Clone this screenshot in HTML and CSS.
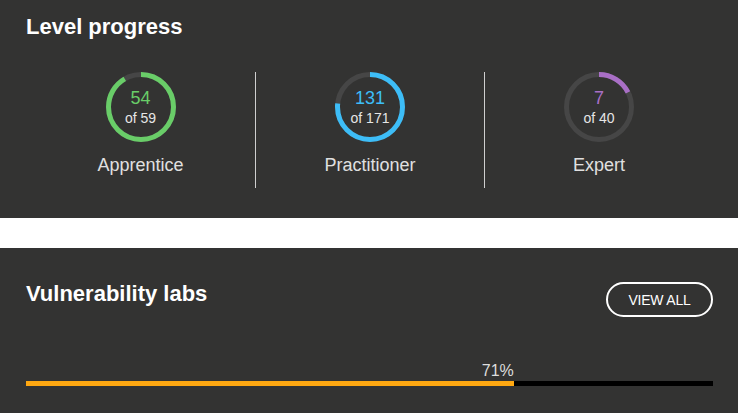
FILE: index.html
```html
<!DOCTYPE html>
<html lang="en">
<head>
<meta charset="utf-8">
<title>Progress</title>
<link rel="stylesheet" href="styles.css">
</head>
<body>
<section class="card card-levels">
  <h2 class="card-title">Level progress</h2>
  <div class="levels">
    <div class="level">
      <div class="ring">
        <svg class="ring-svg" width="70" height="70" viewBox="0 0 70 70">
          <circle class="ring-track" cx="35" cy="35" r="32.5"/>
          <circle class="ring-bar green" cx="35" cy="35" r="32.5" stroke-dasharray="186.9 204.2"/>
        </svg>
        <div class="ring-text">
          <span class="ring-num green-text">54</span>
          <span class="ring-of">of 59</span>
        </div>
      </div>
      <div class="level-name">Apprentice</div>
    </div>
    <div class="level">
      <div class="ring">
        <svg class="ring-svg" width="70" height="70" viewBox="0 0 70 70">
          <circle class="ring-track" cx="35" cy="35" r="32.5"/>
          <circle class="ring-bar blue" cx="35" cy="35" r="32.5" stroke-dasharray="156.4 204.2"/>
        </svg>
        <div class="ring-text">
          <span class="ring-num blue-text">131</span>
          <span class="ring-of">of 171</span>
        </div>
      </div>
      <div class="level-name">Practitioner</div>
    </div>
    <div class="level">
      <div class="ring">
        <svg class="ring-svg" width="70" height="70" viewBox="0 0 70 70">
          <circle class="ring-track" cx="35" cy="35" r="32.5"/>
          <circle class="ring-bar purple" cx="35" cy="35" r="32.5" stroke-dasharray="35.7 204.2"/>
        </svg>
        <div class="ring-text">
          <span class="ring-num purple-text">7</span>
          <span class="ring-of">of 40</span>
        </div>
      </div>
      <div class="level-name">Expert</div>
    </div>
  </div>
</section>
<section class="card card-labs">
  <div class="labs-head">
    <h2 class="card-title">Vulnerability labs</h2>
    <a class="btn-outline" href="#">VIEW ALL</a>
  </div>
  <div class="progress">
    <div class="progress-label" style="width:71%">71%</div>
    <div class="progress-track">
      <div class="progress-fill" style="width:71%"></div>
    </div>
  </div>
</section>
</body>
</html>
```

FILE: styles.css
```css
html, body {
  margin: 0;
  padding: 0;
  background: #ffffff;
  font-family: "Liberation Sans", Arial, sans-serif;
}

.card {
  background: #333332;
  color: #ffffff;
  padding: 0 25px 0 26px;
}

.card-levels {
  padding-top: 14px;
  padding-bottom: 30px;
  margin-bottom: 30px;
}

.card-title {
  margin: 0;
  font-size: 22px;
  font-weight: bold;
  line-height: 25px;
  color: #ffffff;
}

.levels {
  display: grid;
  grid-template-columns: 1fr 1fr 1fr;
  margin-top: 33px;
}

.level {
  display: flex;
  flex-direction: column;
  align-items: center;
  padding-bottom: 12px;
}

.level + .level {
  border-left: 1px solid #cfcfcf;
}

.ring {
  position: relative;
  width: 70px;
  height: 70px;
}

.ring-svg {
  display: block;
  transform: rotate(-90deg);
}

.ring-track {
  fill: none;
  stroke: #464646;
  stroke-width: 5;
}

.ring-bar {
  fill: none;
  stroke-width: 5;
}

.green { stroke: #69cd68; }
.blue { stroke: #3dbdf7; }
.purple { stroke: #a96fc6; }

.green-text { color: #69cd68; }
.blue-text { color: #3dbdf7; }
.purple-text { color: #a96fc6; }

.ring-text {
  position: absolute;
  inset: 0;
  display: flex;
  flex-direction: column;
  align-items: center;
  justify-content: center;
}

.ring-num {
  font-size: 18px;
  line-height: 22px;
}

.ring-of {
  font-size: 14px;
  line-height: 18px;
  color: #e6e6e6;
}

.level-name {
  margin-top: 13px;
  font-size: 18px;
  line-height: 21px;
  color: #e0e0e0;
}

.card-labs {
  padding-top: 33px;
  padding-bottom: 40px;
}

.labs-head {
  display: flex;
  justify-content: space-between;
  align-items: flex-start;
}

.btn-outline {
  margin-top: 1px;
  box-sizing: border-box;
  height: 35px;
  width: 107px;
  display: flex;
  align-items: center;
  justify-content: center;
  border: 2px solid #ffffff;
  border-radius: 18px;
  color: #ffffff;
  font-size: 14px;
  text-decoration: none;
  letter-spacing: -0.2px;
}

.progress {
  margin-top: 45px;
}

.progress-label {
  text-align: right;
  font-size: 16px;
  line-height: 18px;
  color: #dddddd;
  margin-bottom: 1px;
}

.progress-track {
  height: 5px;
  background: #000000;
}

.progress-fill {
  height: 100%;
  background: #ffa811;
}
```
